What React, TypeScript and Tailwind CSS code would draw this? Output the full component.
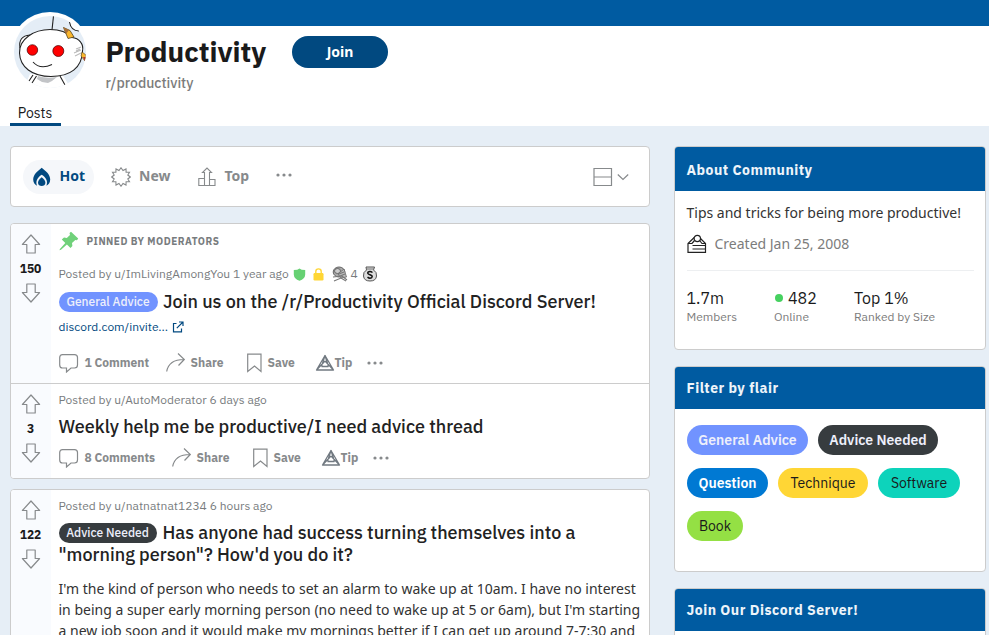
import React from "react";

const plex = "font-['IBM_Plex_Sans','Inter',sans-serif]";
const noto = "font-['Noto_Sans',sans-serif]";

function Avatar() {
  return (
    <svg width="72" height="72" viewBox="0 0 72 72" className="rounded-full bg-[#e4edf6]">
      <path d="M16 58 Q13 66 8 74 H58 L48 58Z" fill="#fff" />
      <path d="M24 60 Q32 63 43 61 L38 65 L34 67 L28 66 L23 63Z" fill="#c2c4c7" />
      <g fill="none" stroke="#222" strokeWidth="1.100">
        <path d="M39.500 0 L38 14" />
        <path d="M55 5 Q57 15 65 15 L72 10 L66 0Z" fill="#fff" stroke="none" />
        <path d="M55.500 6 Q57 15 65 15" />
        <path d="M6 32 Q4 20 16 19" fill="#fff" />
        <path d="M5.500 37 C5 23 20 13.500 36 13.500 C46 13.500 54 17 58 21.500 C65 22 70 28 68.500 35 C68 52 56 60.500 37 60.500 C18 60.500 6 51 5.500 37Z" fill="#fff" />
        <path d="M19 46 Q26 54 38 48.500" />
        <path d="M19 59 L15 65 M22.500 60 L18 67 M46 60 L51 69" />
      </g>
      <path d="M62 33 L67 31 M60 37 L67 34 M61 40 L67 37 M62 35 L66 33" stroke="#bbb" strokeWidth="1.100" />
      <circle cx="18.400" cy="34" r="5.300" fill="#f00" stroke="#400" strokeWidth=".7" />
      <circle cx="44.300" cy="35" r="5.500" fill="#f00" stroke="#400" strokeWidth=".7" />
      <path d="M49.500 11.500 L56 14.500 L60 21 L54 22.500Z" fill="#fbb72c" stroke="#52421e" strokeWidth=".8" />
      <path d="M49.500 11.500 L55 14 L52 18Z" fill="#a86f38" />
      <path d="M68 36 L72 39 L71 45 L67 40Z" fill="#fbb72c" stroke="#52421e" strokeWidth=".6" />
      <path d="M69 41 L71 45 L72 41Z" fill="#a33" />
    </svg>
  );
}

function Arrow({ down = false }: { down?: boolean }) {
  return (
    <svg width="20" height="20" viewBox="0 0 20 20" className={down ? "rotate-180" : ""}>
      <path d="M10 1 L18.600 10.500 H14.200 V19 H5.800 V10.500 H1.400Z" fill="none" stroke="#878a8c" strokeWidth="1.200" strokeLinejoin="round" />
    </svg>
  );
}

function Votes({ n }: { n: string }) {
  return (
    <div className="flex w-10 shrink-0 flex-col items-center bg-[#f9fbfe] pr-px pt-[10px]">
      <Arrow />
      <div className={`${plex} flex h-[29px] items-center text-[12px] font-bold text-[#1a1a1b]`}>{n}</div>
      <Arrow down />
    </div>
  );
}

function Dots() {
  return (
    <svg width="16" height="4" viewBox="0 0 16 4" fill="#878a8c">
      <circle cx="2" cy="2" r="1.600" />
      <circle cx="8" cy="2" r="1.600" />
      <circle cx="14" cy="2" r="1.600" />
    </svg>
  );
}

function Actions({ comments, wide = false }: { comments: string; wide?: boolean }) {
  return (
    <div className={`${plex} flex h-8 items-center whitespace-nowrap text-[12px] font-bold text-[#878a8c]`}>
      <svg width="20" height="20" viewBox="0 0 20 20" fill="none" stroke="#878a8c" strokeWidth="1.200">
        <path d="M3.500 1.600 H15.500 Q18.500 1.600 18.500 4.600 V12 Q18.500 15 15.500 15 H12 L7.500 19 V15 H3.500 Q.7 15 .7 12 V4.600 Q.7 1.600 3.500 1.600Z" />
      </svg>
      <span className={wide ? "ml-[6px] w-[71px]" : "ml-[6px] w-[65px]"}>{comments}</span>
      <svg className="ml-4 mr-[5px]" width="20" height="22" viewBox="0 0 20 22" fill="none" stroke="#878a8c" strokeWidth="1.200">
        <path d="M.7 19.500 C2 12 7 7.500 18 7.500 M12 1.500 L18.300 7.500 L12.500 13.500" />
      </svg>
      <span className="w-[33px]">Share</span>
      <svg className="ml-[23px] mr-[6px]" width="15" height="20" viewBox="0 0 15 20" fill="none" stroke="#878a8c" strokeWidth="1.200">
        <path d="M.7 1.200 H14 V18.500 L7.500 13 L.7 18.500Z" />
      </svg>
      <span className="w-[27px]">Save</span>
      <svg className="ml-[20px]" width="20" height="18" viewBox="0 0 20 18" fill="none" stroke="#717981" strokeWidth="1.300" strokeLinejoin="round">
        <path d="M10 1.500 L18.500 16 H1.500Z M10 1.500 L6.500 12.500 M10 1.500 L13.500 12.500 M6.500 12.500 H13.500 M10 7 L1.500 16 M10 7 L18.500 16" />
      </svg>
      <span className="w-[17px]">Tip</span>
      <span className="ml-[15px]"><Dots /></span>
    </div>
  );
}

function Meta({ children }: { children: React.ReactNode }) {
  return <div className={`${plex} flex h-5 items-center whitespace-nowrap text-[12px] text-[#787c7e]`}>{children}</div>;
}

function SideCard({ title, className, tall = false, children }: { title: string; className: string; tall?: boolean; children?: React.ReactNode }) {
  return (
    <section className={`${className} overflow-hidden rounded-[4px] border border-[#ccc] bg-white`}>
      <h2 className={`${plex} ${tall ? "h-11 pt-[2px]" : "h-[42px]"} flex items-center bg-[#005ba1] px-[11.500px] text-[14px] font-bold tracking-[0.5px] text-[#edf4fa]`}>{title}</h2>
      {children}
    </section>
  );
}

export default function App() {
  return (
    <div className="h-[635px] w-[989px] overflow-hidden bg-[#e6eef6] text-[#1a1a1b]">
      <div className="h-[26px] bg-[#005ba1]" />
      <header className="flex h-[100px] flex-col bg-white pl-[10px]">
        <div className="flex h-[76px]">
          <div className="-mt-[14px] size-20 shrink-0 rounded-full bg-white p-1"><Avatar /></div>
          <div className={`${plex} ml-[15.500px] w-[186.500px] whitespace-nowrap`}>
            <h1 className="mt-[9px] text-[28px] font-bold leading-[34px]">Productivity</h1>
            <p className="mt-[4px] text-[14px] font-medium leading-5 text-[#7c7c7c]">r/productivity</p>
          </div>
          <button className={`${noto} mt-[10px] h-8 w-24 rounded-full bg-[#014980] pb-px text-[14px] font-bold text-white`}>Join</button>
        </div>
        <div className={`${plex} flex h-6 w-[51px] items-center justify-center border-b-[3px] border-[#014980] pr-px pt-[2px] text-[14px]`}>Posts</div>
      </header>

      <div className="flex items-start gap-6 pl-[10px] pt-5">
        <main className="w-[640px]">
          <div className={`${noto} flex h-[61px] items-center rounded-[4px] border border-[#ccc] bg-white pl-3 text-[14px] font-bold text-[#878a8c]`}>
            <div className="flex h-[34px] w-[71px] items-center rounded-full bg-[#f5f7fa] pl-[10px] text-[#014980]">
              <svg width="18" height="20" viewBox="0 0 18 20" className="mr-[8.500px]" fill="#014980">
                <path d="M8.700 .8 C12.500 3.800 17.200 7.500 17.200 12.500 C17.200 15.500 15.500 18 13.400 18.700 C15.500 13.500 12 9.500 8.700 7.700 C5.500 9.500 2 13.500 4 18.700 C2 18 .2 15.500 .2 12.500 C.2 7.500 5 3.800 8.700 .8Z" />
                <path d="M8.700 10.300 C10.700 11.900 12.400 13.600 12.400 15.800 C12.400 20.200 5 20.200 5 15.800 C5 13.600 6.700 11.900 8.700 10.300Z" />
              </svg>
              <span className="pb-[2px]">Hot</span>
            </div>
            <svg className="ml-[17px] mr-2" width="20" height="20" viewBox="0 0 20 20" fill="none" stroke="#878a8c" strokeWidth="1.100">
              <path d="M10 .8 L12 3.600 L15 2 L15.100 5.200 L18.500 5.200 L16.800 8 L19.300 10 L16.800 12 L18.500 14.800 L15.100 14.800 L15 18 L12 16.400 L10 19.200 L8 16.400 L5 18 L4.900 14.800 L1.500 14.800 L3.200 12 L.7 10 L3.200 8 L1.500 5.200 L4.900 5.200 L5 2 L8 3.600Z" />
            </svg>
            <span className="w-8 pb-[2px]">New</span>
            <svg className="ml-[26.500px] mr-[9px]" width="18" height="20" viewBox="0 0 18 20" fill="none" stroke="#878a8c" strokeWidth="1.100">
              <path d="M6.500 18.500 V5.500 H4.500 L9 1 L13.500 5.500 H11.500 V18.500 M6.500 11.500 H.8 V18.500 H17 V12.500 H11.500" />
            </svg>
            <span className="w-6 pb-[2px]">Top</span>
            <span className="-mt-[3px] ml-[27.500px] flex"><Dots /></span>
            <svg className="ml-auto" width="20" height="20" viewBox="0 0 20 20" fill="none" stroke="#878a8c" strokeWidth="1.200"><path d="M1 1.500 H18.500 V18.500 H1Z M1 10 H18.500" /></svg>
            <svg className="ml-1 mr-[20px]" width="12" height="8" viewBox="0 0 12 8" fill="none" stroke="#878a8c" strokeWidth="1.200"><path d="M.8 1.500 L6 6.500 L11.200 1.500" /></svg>
          </div>

          <section className="mt-4 overflow-hidden rounded-[4px] border border-[#ccc] bg-white">
            <article className="flex h-[160px] border-b border-[#ccc]">
              <Votes n="150" />
              <div className="pl-[7.500px] pt-2">
                <div className={`${plex} flex h-[18px] items-center text-[10px] font-bold tracking-[0.5px] text-[#787c7e]`}>
                  <svg width="20" height="20" viewBox="0 0 20 20" className="mr-2" fill="#70d17a"><path d="M12 .8 L19.200 7.500 L18 9.200 L16.300 9 L13 12 L13.400 15 L11.500 17 L7.900 13.500 L2 18.800 L.5 19.300 L.9 17.900 L6.300 12 L2.800 8.500 L5 6.500 L7.800 7 L11 4 L10.500 2Z" /></svg>
                  PINNED BY MODERATORS
                </div>
                <div className="mt-[14px]">
                  <Meta>
                    <span className="w-[234px]">Posted by u/ImLivingAmongYou 1 year ago</span>
                    <svg width="13" height="13" viewBox="0 0 13 13" fill="#66d173"><path d="M6.500 .5 Q8 2 12.200 2 V6.500 Q12 11 6.500 12.800 Q1 11 .8 6.500 V2 Q5 2 6.500 .5Z" /></svg>
                    <svg className="ml-[7.500px]" width="11" height="13" viewBox="0 0 11 13"><path d="M2.800 6 V3.500 Q2.800 .9 5.500 .9 Q8.200 .9 8.200 3.500 V6" fill="none" stroke="#ffd635" strokeWidth="1.400" /><rect x=".5" y="5" width="10" height="7.500" rx="1.200" fill="#ffd635" /></svg>
                    <svg className="ml-2" width="16" height="16" viewBox="0 0 16 16"><ellipse cx="7" cy="6" rx="5.800" ry="5" fill="#aaa" stroke="#666" /><ellipse cx="5.500" cy="5" rx="3" ry="2.500" fill="#ccc" stroke="#555" strokeWidth=".8" /><path d="M6 8 L12 3 L14.500 11 L9 12Z" fill="#bbb" stroke="#666" strokeWidth=".8" /><path d="M1 11 L10 10 L15 14 M2 15 L9 12 L14 15 M7 8 L12 6 M8 10 L13 8" fill="none" stroke="#777" strokeWidth="1.100" /></svg>
                    <span className="ml-[2.500px] w-[8px]">4</span>
                    <svg className="ml-[3px]" width="16" height="16" viewBox="0 0 16 16"><path d="M4 1 H12.500 L11.500 4 Q15 6 14.500 10 Q14 15 8 15 Q2 15 1.500 10 Q1 6 4.500 4Z" fill="#ddd" stroke="#555" /><path d="M4 3 H12" stroke="#777" /><path d="M10.500 6.500 Q8 4.800 6 6.200 Q5 7.800 8 8.700 Q11.200 9.800 9.700 11.600 Q7.700 13 5.500 11.200" fill="none" stroke="#111" strokeWidth="1.500" /></svg>
                  </Meta>
                </div>
                <div className={`${plex} mt-[6px] flex h-6 items-center whitespace-nowrap`}>
                  <span className="flex h-5 w-[99px] items-center justify-center rounded-full bg-[#7193ff] text-[12px] font-medium text-[#edeffb]">General Advice</span>
                  <h3 className="ml-[5.500px] pb-[2px] text-[18px] font-medium text-[#222]">Join us on the /r/Productivity Official Discord Server!</h3>
                </div>
                <div className={`${plex} mt-[3px] flex h-5 items-center text-[12px] text-[#014980]`}>
                  <span className="w-[113.500px]">discord.com/invite...</span>
                  <svg width="12" height="12" viewBox="0 0 12 12" fill="none" stroke="#014980" strokeWidth="1.200"><path d="M4.500 2.500 H1.500 V10.800 H9.500 V7.500 M7 1 H11 V5 M11 1 L4.800 7.200" /></svg>
                </div>
                <div className="mt-[10px]"><Actions comments="1 Comment" /></div>
              </div>
            </article>
            <article className="flex h-[94px]">
              <Votes n="3" />
              <div className="pl-[7.500px] pt-[6px]">
                <Meta>Posted by u/AutoModerator 6 days ago</Meta>
                <h3 className={`${plex} mt-[4px] flex h-6 items-center text-[18px] font-medium text-[#222]`}>Weekly help me be productive/I need advice thread</h3>
                <div className="mt-[4px]"><Actions comments="8 Comments" wide /></div>
              </div>
            </article>
          </section>

          <section className="mt-[10px] overflow-hidden rounded-[4px] border border-[#ccc] bg-white">
            <article className="flex h-[180px]">
              <Votes n="122" />
              <div className="pl-[7.500px] pt-[6px]">
                <Meta>Posted by u/natnatnat1234 6 hours ago</Meta>
                <h3 className={`${plex} mt-[6px] whitespace-nowrap text-[18px] font-medium leading-[22px] text-[#222]`}>
                  <span className="flex items-center"><span className="mr-[6px] flex h-5 w-[98px] items-center justify-center rounded-full bg-[#373c3f] text-[12px] font-medium text-[#edeffb]">Advice Needed</span>Has anyone had success turning themselves into a</span>
                  <span className="block">"morning person"? How'd you do it?</span>
                </h3>
                <p className={`${noto} mt-3 whitespace-nowrap text-[14px] leading-[21px] text-[#333]`}>
                  I'm the kind of person who needs to set an alarm to wake up at 10am. I have no interest<br />
                  in being a super early morning person (no need to wake up at 5 or 6am), but I'm starting<br />
                  a new job soon and it would make my mornings better if I can get up around 7-7:30 and
                </p>
              </div>
            </article>
          </section>
        </main>

        <aside className="w-[312px]">
          <SideCard title="About Community" className="h-[204px]" tall>
            <div className={`${noto} px-[11.500px] text-[14px]`}>
              <p className="mt-[11px] whitespace-nowrap leading-[21px] text-[#333]">Tips and tricks for being more productive!</p>
              <div className="mt-[10px] flex h-[21px] items-center text-[#7c7c7c]">
                <svg className="mr-2" width="20" height="20" viewBox="0 0 20 20" fill="none" stroke="#222" strokeWidth="1.200"><path d="M7.200 3.500 L1 9.500 V18.300 H18.500 V9.500 L13.500 4.500 M1 9.500 H5 L7.500 6.500 M13 7 L15 9.500 H18.500 M5.500 11.500 H18 M5.500 15 H18" /><circle cx="10.300" cy="4.500" r="3.200" /></svg>
                Created Jan 25, 2008
              </div>
              <div className="mt-4 border-t border-[#edeff1]" />
              <div className={`${plex} flex pt-4`}>
                {[["1.7m", "Members", "w-[87.500px]"], ["482", "Online", "w-[80px]"], ["Top 1%", "Ranked by Size", "w-[100px]"]].map(([v, l, w]) => (
                  <div key={l} className={`${w} whitespace-nowrap`}>
                    <div className="flex h-[22px] items-center text-[16px] text-[#1a1a1b]">
                      {v === "482" && <span className="ml-[1px] mr-[5px] size-2 rounded-full bg-[#46d160]" />}{v}
                    </div>
                    <div className="h-4 text-[12px] leading-4 text-[#7c7c7c]">{l}</div>
                  </div>
                ))}
              </div>
            </div>
          </SideCard>
          <SideCard title="Filter by flair" className="mt-4 h-[206px]">
            <div className={`${plex} flex flex-wrap gap-x-[10px] gap-y-[13px] pl-3 pt-4 text-[14px] [&>span]:flex [&>span]:h-[30px] [&>span]:items-center [&>span]:justify-center [&>span]:rounded-full`}>
              <span className="w-[121px] bg-[#7193ff] font-semibold text-[#edeffb]">General Advice</span>
              <span className="w-[120px] bg-[#373c3f] font-semibold text-[#edeffb]">Advice Needed</span>
              <span className="w-[81px] bg-[#0079d3] font-semibold text-white">Question</span>
              <span className="w-[90px] bg-[#ffd635]">Technique</span>
              <span className="w-[82px] bg-[#0dd3bb]">Software</span>
              <span className="w-[56px] bg-[#94e044]">Book</span>
            </div>
          </SideCard>
          <SideCard title="Join Our Discord Server!" className="mt-4 h-[100px]" />
        </aside>
      </div>
    </div>
  );
}
